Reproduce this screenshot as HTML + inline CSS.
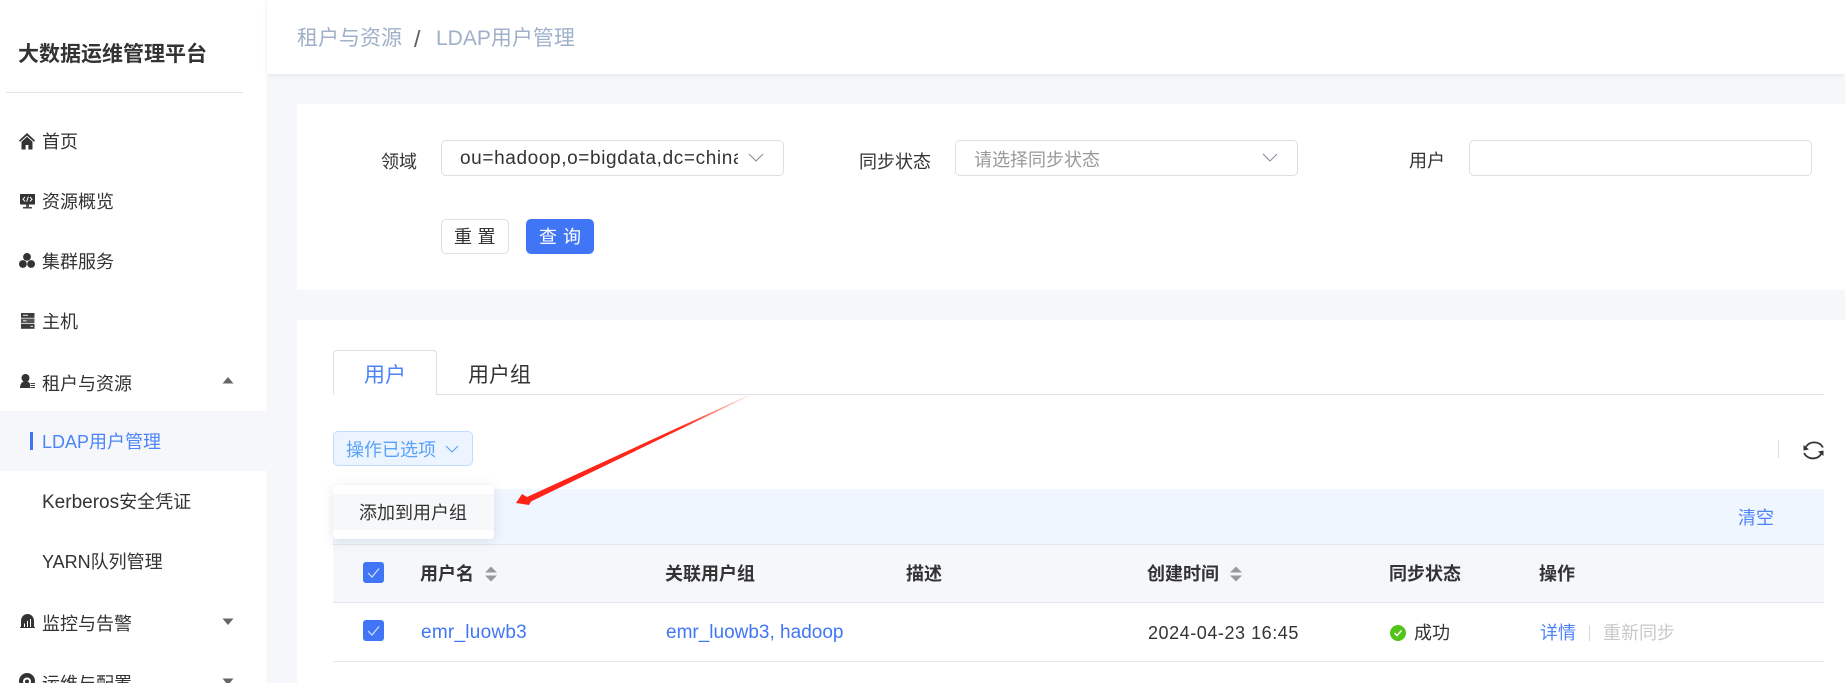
<!DOCTYPE html>
<html lang="zh"><head><meta charset="utf-8"><title>LDAP用户管理</title>
<style>
html,body{margin:0;padding:0;width:1845px;height:683px;overflow:hidden;background:#f5f7fa}
body{font-family:"Liberation Sans","Noto Sans CJK SC",sans-serif;font-size:18px;color:#333;position:relative}
.a{position:absolute}
.t{position:absolute;white-space:nowrap;line-height:26px;height:26px}
.b{font-weight:700}
.link{color:#4076f6}
.box{position:absolute;box-sizing:border-box;background:#fff;border:1px solid #dedfe3;border-radius:5px}
.cb{position:absolute;width:21px;height:21px;background:#4076f6;border-radius:3px}
svg{position:absolute;overflow:visible}
</style></head><body>

<!-- Sidebar -->
<div class="a" style="left:0;top:0;width:267px;height:683px;background:#fff"></div>
<div class="t b" style="left:18px;top:42px;font-size:21px;color:#333">大数据运维管理平台</div>
<div class="a" style="left:6px;top:92px;width:237px;height:1px;background:#e4e4ec"></div>

<svg style="left:19px;top:133px" width="16" height="17" viewBox="0 0 16 17"><path d="M8 0 L16 7.5 L15 8.8 L8 2.6 L1 8.8 L0 7.5Z" fill="#333"/><path d="M2.5 8.7 L8 3.7 L13.5 8.7 V16.5 H9.4 V12 H6.6 V16.5 H2.5Z" fill="#333"/></svg>
<div class="t" style="left:42px;top:129px">首页</div>

<svg style="left:20px;top:194px" width="15" height="15" viewBox="0 0 15 15"><rect x="0" y="0" width="15" height="10.5" rx="0.5" fill="#333"/><path d="M5 3 L3 5.2 L5 7.4 M10 3 L12 5.2 L10 7.4 M8.4 2.6 L6.6 7.8" stroke="#fff" stroke-width="1" fill="none"/><rect x="6" y="10.5" width="3" height="2.5" fill="#555"/><rect x="3" y="13" width="9" height="1.5" fill="#444"/></svg>
<div class="t" style="left:42px;top:189px">资源概览</div>

<svg style="left:19px;top:253px" width="16" height="15" viewBox="0 0 16 15"><circle cx="8" cy="3.9" r="3.9" fill="#333"/><circle cx="3.9" cy="11" r="3.9" fill="#333"/><circle cx="12.1" cy="11" r="3.9" fill="#333"/></svg>
<div class="t" style="left:42px;top:249px">集群服务</div>

<svg style="left:20.5px;top:313px" width="14" height="16" viewBox="0 0 14 16"><rect x="0" y="0" width="13.5" height="4.8" fill="#3c3c3c"/><rect x="0" y="5.5" width="13.5" height="4.8" fill="#555"/><rect x="0" y="11" width="13.5" height="4.8" fill="#3c3c3c"/><path d="M2 2.3H7M2 7.8H5.5M9.5 13.3H12" stroke="#ddd" stroke-width="1.1"/></svg>
<div class="t" style="left:42px;top:309px">主机</div>

<svg style="left:20px;top:374px" width="15" height="14" viewBox="0 0 15 14"><circle cx="5.5" cy="4" r="4" fill="#333"/><path d="M0 14 C0 10 2 7.2 5.5 7.2 C8 7.2 9.5 8.2 10 10 V14Z" fill="#333"/><path d="M10.5 9.5H15M10.5 11.5H15M10.5 13.5H15" stroke="#444" stroke-width="1.1"/></svg>
<div class="t" style="left:42px;top:371px">租户与资源</div>
<svg style="left:222px;top:376px" width="12" height="8" viewBox="0 0 12 8"><path d="M6 1 L11.5 7.5 H0.5Z" fill="#666"/></svg>

<div class="a" style="left:0;top:411px;width:267px;height:60px;background:#f5f7fa"></div>
<div class="a" style="left:30px;top:432px;width:3px;height:18px;background:#4076f6"></div>
<div class="t link" style="left:42px;top:429px;color:#4c84f8">LDAP用户管理</div>
<div class="t" style="left:42px;top:489px"><span style="font-size:19px">Kerberos</span>安全凭证</div>
<div class="t" style="left:42px;top:549px">YARN队列管理</div>

<svg style="left:20px;top:614px" width="15" height="14" viewBox="0 0 15 14"><path d="M1 13.5 V7 C1 3 4 0 7.5 0 C11 0 14 3 14 7 V13.5Z" fill="#333"/><path d="M4.5 13V9.5M7.5 13V7M10.5 13V5" stroke="#fff" stroke-width="1"/><rect x="0" y="13" width="15" height="1" fill="#333"/></svg>
<div class="t" style="left:42px;top:611px">监控与告警</div>
<svg style="left:222px;top:618px" width="12" height="8" viewBox="0 0 12 8"><path d="M6 7 L11.5 0.5 H0.5Z" fill="#666"/></svg>

<svg style="left:19px;top:673px" width="16" height="16" viewBox="0 0 16 16"><circle cx="8" cy="8" r="8" fill="#333"/><circle cx="8" cy="8.5" r="4" fill="#fff"/><circle cx="8" cy="8.5" r="2" fill="#333"/></svg>
<div class="t" style="left:42px;top:671px">运维与配置</div>
<svg style="left:222px;top:678px" width="12" height="8" viewBox="0 0 12 8"><path d="M6 7 L11.5 0.5 H0.5Z" fill="#666"/></svg>

<!-- Header -->
<div class="a" style="left:267px;top:0;width:1578px;height:74px;background:#fff;box-shadow:0 1px 5px rgba(0,0,0,.08)"></div>
<div class="t" style="left:297px;top:26px;font-size:21px;color:#9fb0c8">租户与资源</div>
<div class="t" style="left:414px;top:26px;font-size:23px;color:#5a5c60">/</div>
<div class="t" style="left:436px;top:26px;font-size:21px;color:#9fb0c8">LDAP用户管理</div>

<!-- Filter card -->
<div class="a" style="left:297px;top:104px;width:1548px;height:186px;background:#fff"></div>
<div class="t" style="left:381px;top:149px">领域</div>
<div class="box" style="left:441px;top:140px;width:343px;height:36px"></div>
<div class="t" style="left:460px;top:146px;width:278px;overflow:hidden;font-size:19px;letter-spacing:.62px">ou=hadoop,o=bigdata,dc=china</div>
<svg style="left:748px;top:153px" width="16" height="9" viewBox="0 0 16 9"><path d="M1 1 L8 8 L15 1" fill="none" stroke="#8a8f99" stroke-width="1.1"/></svg>

<div class="t" style="left:859px;top:149px">同步状态</div>
<div class="box" style="left:955px;top:140px;width:343px;height:36px"></div>
<div class="t" style="left:974px;top:147px;color:#999">请选择同步状态</div>
<svg style="left:1262px;top:153px" width="16" height="9" viewBox="0 0 16 9"><path d="M1 1 L8 8 L15 1" fill="none" stroke="#8a8f99" stroke-width="1.1"/></svg>

<div class="t" style="left:1409px;top:148px">用户</div>
<div class="box" style="left:1469px;top:140px;width:343px;height:36px"></div>

<div class="box" style="left:441px;top:219px;width:68px;height:35px"></div>
<div class="t" style="left:454px;top:224px;letter-spacing:5.5px">重置</div>
<div class="a" style="left:526px;top:219px;width:68px;height:35px;background:#4076f6;border-radius:5px"></div>
<div class="t" style="left:539px;top:224px;letter-spacing:6px;color:#fff">查询</div>

<!-- Table card -->
<div class="a" style="left:297px;top:320px;width:1548px;height:363px;background:#fff"></div>

<div class="a" style="left:333px;top:394px;width:1491px;height:1px;background:#dcdfe6"></div>
<div class="a" style="left:333px;top:350px;width:104px;height:45px;box-sizing:border-box;background:#fff;border:1px solid #dcdfe6;border-bottom:none;border-radius:4px 4px 0 0"></div>
<div class="t" style="left:364px;top:363px;font-size:21px;color:#4c84f8">用户</div>
<div class="t" style="left:468px;top:363px;font-size:21px;color:#333">用户组</div>

<div class="a" style="left:333px;top:431px;width:140px;height:35px;box-sizing:border-box;background:#ecf4ff;border:1px solid #c4dcfb;border-radius:5px"></div>
<div class="t" style="left:346px;top:437px;color:#5aa2f8">操作已选项</div>
<svg style="left:445px;top:445px" width="14" height="8" viewBox="0 0 14 8"><path d="M1 1 L7 7 L13 1" fill="none" stroke="#5aa2f8" stroke-width="1.1"/></svg>

<div class="a" style="left:1778px;top:440px;width:1px;height:18px;background:#e0e0e0"></div>
<svg style="left:1802px;top:439px" width="23" height="23" viewBox="0 0 23 23"><path d="M21 8.5 A10 10 0 0 0 3.5 8.5 M2 14 A10 10 0 0 0 19.5 14.5" fill="none" stroke="#333" stroke-width="1.8"/><path d="M1.5 6 L1.5 11.5 L7 10.5Z M21.5 17 L21.5 11.5 L16 12.5Z" fill="#333"/></svg>

<!-- Alert band -->
<div class="a" style="left:333px;top:489px;width:1491px;height:55px;background:#f0f6ff;border-radius:3px 3px 0 0"></div>
<div class="t link" style="left:1738px;top:505px;color:#4c84f8">清空</div>

<!-- Table header -->
<div class="a" style="left:333px;top:544px;width:1491px;height:59px;background:#f5f7fa;border-top:1px solid #e2e6ee;border-bottom:1px solid #e2e6ee;box-sizing:border-box"></div>
<div class="cb" style="left:363px;top:562px"></div>
<svg style="left:363px;top:562px" width="21" height="21" viewBox="0 0 21 21"><path d="M5 11 L9 15 L16 6.5" fill="none" stroke="#dbe6ff" stroke-width="1.1"/></svg>
<div class="t b" style="left:420px;top:561px">用户名</div>
<svg style="left:485px;top:566px" width="12" height="16" viewBox="0 0 12 16"><path d="M6 0.5 L12 6.5 H0Z M6 15.5 L12 9.5 H0Z" fill="#999"/></svg>
<div class="t b" style="left:665px;top:561px">关联用户组</div>
<div class="t b" style="left:906px;top:561px">描述</div>
<div class="t b" style="left:1147px;top:561px">创建时间</div>
<svg style="left:1230px;top:566px" width="12" height="16" viewBox="0 0 12 16"><path d="M6 0.5 L12 6.5 H0Z M6 15.5 L12 9.5 H0Z" fill="#999"/></svg>
<div class="t b" style="left:1389px;top:561px">同步状态</div>
<div class="t b" style="left:1539px;top:561px">操作</div>

<!-- Table row -->
<div class="cb" style="left:363px;top:620px"></div>
<svg style="left:363px;top:620px" width="21" height="21" viewBox="0 0 21 21"><path d="M5 11 L9 15 L16 6.5" fill="none" stroke="#dbe6ff" stroke-width="1.1"/></svg>
<div class="t link" style="left:421px;top:620px;font-size:19px;letter-spacing:.25px">emr_luowb3</div>
<div class="t link" style="left:666px;top:620px;font-size:19px">emr_luowb3, hadoop</div>
<div class="t" style="left:1148px;top:620px;letter-spacing:.55px">2024-04-23 16:45</div>
<svg style="left:1390px;top:625px" width="16" height="16" viewBox="0 0 16 16"><circle cx="8" cy="8" r="8" fill="#52c41a"/><path d="M4.5 8 L7 10.5 L11.5 5.5" fill="none" stroke="#fff" stroke-width="1.5"/></svg>
<div class="t" style="left:1414px;top:620px">成功</div>
<div class="t link" style="left:1540px;top:620px;color:#4c84f8">详情</div>
<div class="a" style="left:1589px;top:625px;width:1px;height:16px;background:#d8d8d8"></div>
<div class="t" style="left:1603px;top:620px;color:#c8c9cc">重新同步</div>
<div class="a" style="left:333px;top:661px;width:1491px;height:1px;background:#e4e7ed"></div>

<!-- Dropdown popup -->
<div class="a" style="left:333px;top:485px;width:161px;height:54px;background:#fff;border-radius:4px;box-shadow:0 2px 12px rgba(0,0,0,.1)"></div>
<div class="a" style="left:333px;top:494px;width:161px;height:36px;background:#f7f8fa"></div>
<div class="t" style="left:359px;top:500px">添加到用户组</div>

<!-- Arrow -->
<svg style="left:0;top:0" width="1845" height="683" viewBox="0 0 1845 683">
<defs><linearGradient id="g" gradientUnits="userSpaceOnUse" x1="748" y1="396" x2="530" y2="500"><stop offset="0" stop-color="#ff2a1a" stop-opacity=".1"/><stop offset=".3" stop-color="#ff2a1a"/><stop offset="1" stop-color="#ff2218"/></linearGradient></defs>
<path d="M516 503 L522 494 L527 497 L748 395.5 L748 396.5 L531 501.5 L529 505Z" fill="url(#g)"/>
</svg>

</body></html>
